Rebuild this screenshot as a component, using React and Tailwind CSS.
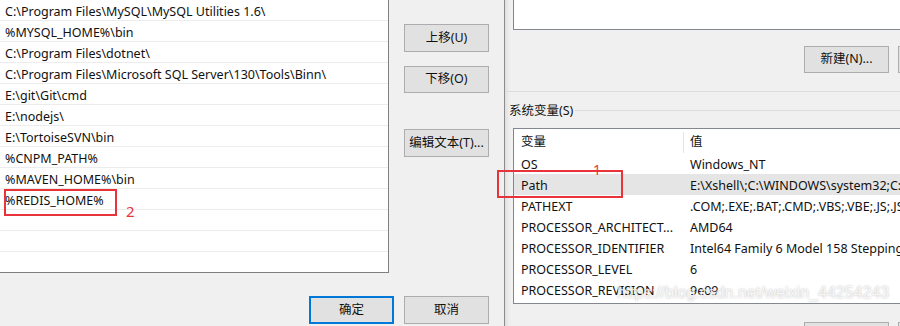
const paths = [
  'C:\\Program Files\\MySQL\\MySQL Utilities 1.6\\',
  '%MYSQL_HOME%\\bin',
  'C:\\Program Files\\dotnet\\',
  'C:\\Program Files\\Microsoft SQL Server\\130\\Tools\\Binn\\',
  'E:\\git\\Git\\cmd',
  'E:\\nodejs\\',
  'E:\\TortoiseSVN\\bin',
  '%CNPM_PATH%',
  '%MAVEN_HOME%\\bin',
  '%REDIS_HOME%',
  '',
  '',
  '',
];

const sysVars = [
  ['OS', 'Windows_NT'],
  ['Path', 'E:\\Xshell\\;C:\\WINDOWS\\system32;C:\\WINDOWS;C:\\WINDOWS\\System32\\Wbem'],
  ['PATHEXT', '.COM;.EXE;.BAT;.CMD;.VBS;.VBE;.JS;.JSE;.WSF;.WSH;.MSC'],
  ['PROCESSOR_ARCHITECT...', 'AMD64'],
  ['PROCESSOR_IDENTIFIER', 'Intel64 Family 6 Model 158 Stepping 9, GenuineIntel'],
  ['PROCESSOR_LEVEL', '6'],
  ['PROCESSOR_REVISION', '9e09'],
];

function Btn({ children, primary, className = 'h-[28px]' }) {
  return (
    <div
      className={`w-[85px] flex items-center justify-center shrink-0 bg-[#e1e1e1] text-[12.5px] text-[#111] ${primary ? 'border-2 border-[#0078d7]' : 'border border-[#adadad]'} ${className}`}
    >
      {children}
    </div>
  );
}

export default function App() {
  return (
    <div className="relative w-[900px] h-[326px] overflow-hidden flex bg-[#f0f0f0] font-['Noto_Sans','Noto_Sans_CJK_SC',sans-serif] text-[#111]">
      {/* Left — edit path dialog */}
      <div className="w-[504px] shrink-0">
        <div className="flex">
          <div className="w-[389px] h-[273px] bg-white border-r border-b border-[#7f7f7f] overflow-hidden">
            {paths.map((p, i) => (
              <div key={i} className="h-[21px] border-b border-[#ececec] px-[5px] pt-[3px] text-[12.5px] leading-[18px] whitespace-nowrap">
                {p}
              </div>
            ))}
          </div>
          <div className="ml-[15px] pt-[24px] flex flex-col">
            <Btn>上移(U)</Btn>
            <Btn className="h-[27px] mt-[14px]">下移(O)</Btn>
            <Btn className="h-[28px] mt-[36px]">编辑文本(T)...</Btn>
          </div>
        </div>
        <div className="mt-[23px] flex justify-end gap-[10px] pr-[15px]">
          <Btn primary>确定</Btn>
          <Btn>取消</Btn>
        </div>
      </div>

      {/* Right — environment variables dialog */}
      <div className="flex-1 min-w-0 border-l border-[#8c8c8c] shadow-[inset_5px_0_4px_-3px_rgba(0,0,0,0.08)]">
        <div className="ml-[8px] h-[30px] bg-white border-l border-b border-[#828790]" />
        <div className="mt-[16px] flex pl-[299px] gap-[9px]">
          <Btn className="h-[27px]">新建(N)...</Btn>
          <Btn className="h-[27px]">编辑(E)...</Btn>
        </div>
        <div className="mt-[18px] h-px bg-[#dcdcdc]" />
        <div className="mt-[8px] h-[20px] flex items-center pl-[4px]">
          <span className="text-[12.5px] leading-[20px] pt-[2px]">系统变量(S)</span>
          <div className="flex-1 h-px bg-[#dcdcdc] ml-[2px]" />
        </div>
        <div className="mt-[8px] ml-[8px] h-[176px] bg-white border-l border-t border-b border-[#828790] overflow-hidden text-[12.5px]">
          <div className="flex h-[24px] items-center whitespace-nowrap pt-[3px]">
            <div className="w-[169px] pl-[7px]">变量</div>
            <div className="h-full pl-[6px] border-l border-[#e5e5e5] flex items-center">值</div>
          </div>
          {sysVars.map(([k, v]) => (
            <div key={k} className={`flex h-[21px] items-center whitespace-nowrap pt-[3px] ${k === 'Path' ? 'bg-[#e5e5e5]' : ''}`}>
              <div className="w-[169px] shrink-0 pl-[7px]">{k}</div>
              <div className="pl-[7px]">{v}</div>
            </div>
          ))}
        </div>
        <div className="mt-[18px] flex pl-[299px] gap-[9px]">
          <Btn>确定</Btn>
          <Btn>取消</Btn>
        </div>
      </div>

      {/* Annotations */}
      <div className="absolute left-[4px] top-[189px] w-[113px] h-[27px] border-2 border-[#e8333b]" />
      <div className="absolute left-[126px] top-[201px] text-[15px] leading-[20px] text-[#e8333b]">2</div>
      <div className="absolute left-[497px] top-[170px] w-[126px] h-[28px] border-2 border-[#e8333b]" />
      <div className="absolute left-[593px] top-[161px] text-[14px] leading-[18px] text-[#e8333b]">1</div>

      {/* Watermark */}
      <div className="absolute left-[617px] top-[282px] text-[16px] leading-[22px] text-white/80 font-['Liberation_Sans',sans-serif] [text-shadow:0_0_2px_rgba(0,0,0,0.3)] whitespace-nowrap">
        https://blog.csdn.net/weixin_44254243
      </div>
    </div>
  );
}
